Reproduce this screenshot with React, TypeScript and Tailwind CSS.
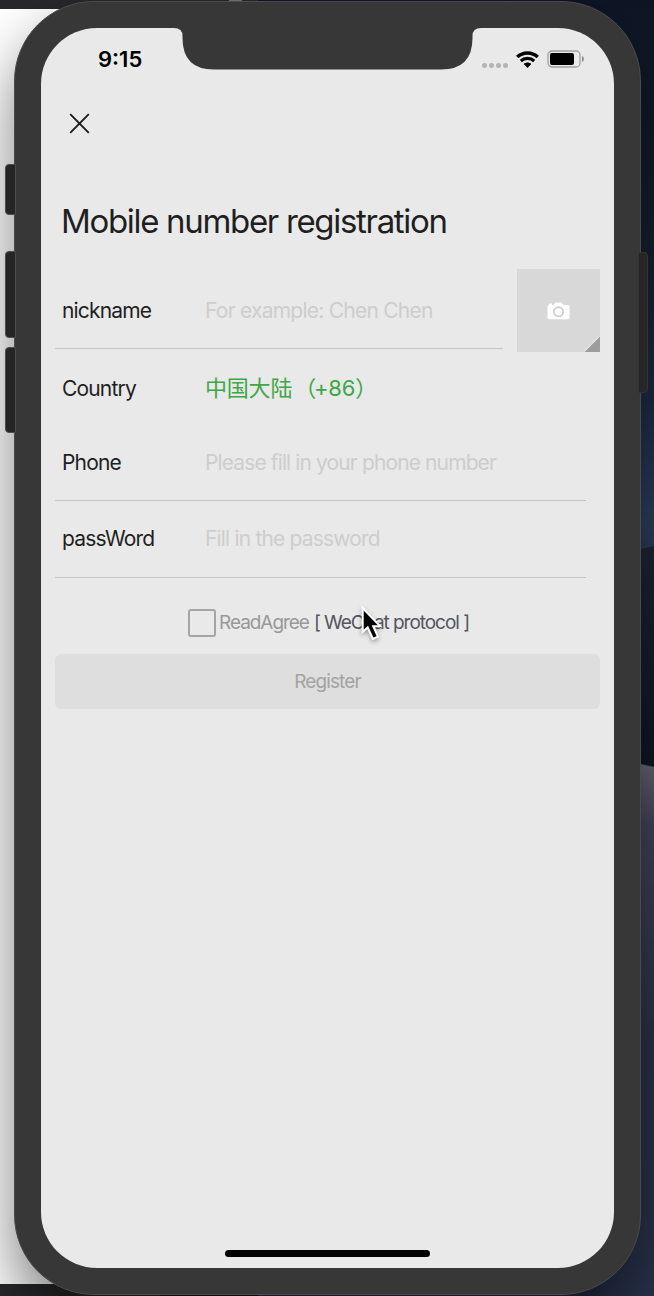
import type { ReactNode } from "react";

function Desktop() {
  return (
    <div className="absolute inset-0 flex overflow-hidden">
      <div className="flex w-[160px] flex-col bg-[#26282b]">
        <div className="h-[9px] shrink-0" />
        <div className="flex-1 bg-white" />
        <div className="h-[12px] shrink-0" />
      </div>
      <div className="flex h-[20px] w-[98px] bg-[#26282b] pl-[69px]">
        <div className="h-[3px] w-[13px] rounded-b-sm bg-[#777777]" />
      </div>
      <div className="flex-1 bg-linear-to-b from-[#0d1425] to-[#242d45]" />
      <svg className="h-[1296px] w-[54px] shrink-0" viewBox="0 0 54 1296">
        <defs>
          <linearGradient id="sky" x1="0" y1="0" x2="0" y2="1">
            <stop offset="0" stopColor="#0e1525" />
            <stop offset="0.45" stopColor="#16202f" />
            <stop offset="0.72" stopColor="#1d2b45" />
            <stop offset="0.93" stopColor="#2e3e5f" />
            <stop offset="1" stopColor="#2b3956" />
          </linearGradient>
          <linearGradient id="ridge" x1="0" y1="0" x2="0" y2="1">
            <stop offset="0" stopColor="#1f2536" />
            <stop offset="1" stopColor="#0e1524" />
          </linearGradient>
          <linearGradient id="dune" x1="0" y1="0" x2="0" y2="1">
            <stop offset="0" stopColor="#686876" />
            <stop offset="0.12" stopColor="#42445a" />
            <stop offset="0.5" stopColor="#2c3148" />
            <stop offset="1" stopColor="#28324c" />
          </linearGradient>
        </defs>
        <rect width="54" height="560" fill="url(#sky)" />
        <path d="M0 549H41L54 546V775H0Z" fill="url(#ridge)" />
        <path d="M0 762L41 764L54 767V1296H0Z" fill="url(#dune)" />
      </svg>
    </div>
  );
}

function StatusBar() {
  return (
    <div className="flex h-[62px] shrink-0 items-center pr-[29px] pl-[57px]">
      <span className="text-[22px] leading-none font-semibold tracking-[0px] text-black">9:15</span>
      <div className="ml-auto flex items-center">
        <div className="mt-[12px] flex gap-[2px]">
          <i className="size-[5px] rounded-full bg-[#b4b4b4]" />
          <i className="size-[5px] rounded-full bg-[#b4b4b4]" />
          <i className="size-[5px] rounded-full bg-[#b4b4b4]" />
          <i className="size-[5px] rounded-full bg-[#b4b4b4]" />
        </div>
        <svg className="ml-[8px] h-[17px] w-[23px]" viewBox="0 0 23 17">
          <path d="M1.2 6C7 .6 16 .6 21.8 6" fill="none" stroke="#000" strokeWidth="3.4" />
          <path d="M4.8 10C8.5 6.5 14.5 6.5 18.2 10" fill="none" stroke="#000" strokeWidth="3.1" />
          <path d="M7.7 13C9.9 11 13.1 11 15.3 13L11.5 17Z" fill="#000" />
        </svg>
        <svg className="ml-[8px] h-[18px] w-[38px]" viewBox="0 0 38 18">
          <rect x="1" y="1" width="32" height="16" rx="4" fill="none" stroke="#a0a0a0" strokeWidth="1.3" />
          <rect x="3" y="3" width="24" height="12" rx="2" fill="#000" />
          <path d="M35 6c2.6 1 2.6 5 0 6Z" fill="#8d8d8d" />
        </svg>
      </div>
    </div>
  );
}

function Field({ label, children }: { label: string; children: ReactNode }) {
  return (
    <div className="flex h-full items-center pt-px pl-[7px] text-[21px] leading-[28px]">
      <span className="w-[143px] shrink-0 tracking-[-0.83px] text-[#1f1f1f]">{label}</span>
      {children}
    </div>
  );
}

function AvatarPicker() {
  return (
    <div className="relative flex size-[83px] shrink-0 items-center justify-center bg-[#d8d8d8]">
      <svg className="h-[18px] w-[23px]" viewBox="0 0 23 18">
        <path d="M2 3V1.5H5V3H6.5L8.5.6H14.5L16.5 3H21Q22.5 3 22.5 4.5V15.8Q22.5 17.3 21 17.3H2Q.5 17.3.5 15.8V4.5Q.5 3 2 3Z" fill="#fff" />
        <circle cx="11.5" cy="9.8" r="4.6" fill="none" stroke="#d0d0d0" strokeWidth="1.9" />
      </svg>
      <svg className="absolute right-0 bottom-0 size-[17px]" viewBox="0 0 17 17">
        <path d="M0 17L17 0V17Z" fill="#e6e6e6" />
        <path d="M1.5 17L17 1.5V17Z" fill="#9c9c9c" />
      </svg>
    </div>
  );
}

function Cursor() {
  return (
    <svg className="absolute top-[575px] left-[317px] h-[42px] w-[32px] drop-shadow-[0_2px_2px_rgba(0,0,0,0.35)]" viewBox="0 0 32 42">
      <path d="M4.7 5V28.8L9.7 24.5L14.9 36L19.9 33.7L15.2 23.2H22.2Z" fill="#000" stroke="#fff" strokeWidth="2" />
    </svg>
  );
}

function Screen() {
  return (
    <main className="relative flex h-[1240px] w-[573px] flex-col overflow-hidden rounded-[56px] bg-[#e9e9e9]">
      <StatusBar />
      <button className="mt-[23px] ml-[28px] size-[21px]" aria-label="Close">
        <svg className="size-[21px]" viewBox="0 0 21 21">
          <path d="M1.2 1.2L19.8 19.8M19.8 1.2L1.2 19.8" stroke="#1c1c1c" strokeWidth="1.9" />
        </svg>
      </button>
      <h1 className="mt-[67px] ml-[20px] text-[33px] leading-[40px] tracking-[-1.32px] whitespace-nowrap text-[#1f1f1f]">
        Mobile number registration
      </h1>
      <div className="mt-[28px] flex pr-[14px] pl-[14px]">
        <div className="mr-[14px] h-[80px] flex-1 border-b border-[#c6c6c6] pt-[3px]">
          <Field label="nickname">
            <span className="tracking-[-0.76px] whitespace-nowrap text-[#cdcdcd]">For example: Chen Chen</span>
          </Field>
        </div>
        <AvatarPicker />
      </div>
      <div className="mr-[28px] ml-[14px] h-[72px]">
        <Field label="Country">
          <span className="mb-px font-['Inter','Noto_Sans_CJK_SC',sans-serif] text-[22px] tracking-[-0.2px] whitespace-nowrap text-[#3ea746]">
            中国大陆<span className="mr-[-2px] ml-[2px]">（</span>+86）
          </span>
        </Field>
      </div>
      <div className="mr-[28px] ml-[14px] h-[77px] border-b border-[#c6c6c6]">
        <Field label="Phone">
          <span className="tracking-[-0.88px] whitespace-nowrap text-[#cdcdcd]">Please fill in your phone number</span>
        </Field>
      </div>
      <div className="mr-[28px] ml-[14px] h-[77px] border-b border-[#c6c6c6] pb-px">
        <Field label="passWord">
          <span className="tracking-[-0.82px] whitespace-nowrap text-[#cdcdcd]">Fill in the password</span>
        </Field>
      </div>
      <div className="mt-[31px] flex h-[28px] items-center pl-[147px] text-[19px] tracking-[-1.04px] whitespace-nowrap">
        <span className="mr-[3px] size-[28px] rounded-[3px] border-2 border-[#a5a5a5]" />
        <span className="text-[#989898]">ReadAgree</span>
        <span className="ml-[5px] text-[#55555f]">[ WeChat protocol ]</span>
      </div>
      <button className="mx-[14px] mt-[17px] h-[55px] shrink-0 rounded-[6px] bg-[#dedede] pt-px text-[19px] tracking-[-0.9px] text-[#a3a3a3]">
        Register
      </button>
      <div className="mt-auto mb-[11px] h-[7px] w-[205px] self-center rounded-full bg-black" />
      <Cursor />
    </main>
  );
}

function Notch() {
  return (
    <svg className="absolute top-[25px] left-[159px] h-[43px] w-[307px]" viewBox="0 0 307 43">
      <path d="M0 0V1Q8.5 1 8.5 9V11Q8.5 42.5 40 42.5H267Q298.5 42.5 298.5 11V9Q298.5 1 307 1V0Z" fill="#373737" />
    </svg>
  );
}

export default function App() {
  return (
    <div className="relative h-[1296px] w-[654px] overflow-hidden bg-[#0d1425] pt-px pl-[14px] font-['Inter',sans-serif]">
      <Desktop />
      <div className="relative h-[1294px] w-[627px] rounded-[80px] border border-[#4b4b4b] bg-[#373737] pt-[26px] pl-[26px] shadow-[0_30px_60px_rgba(0,0,0,0.5)]">
        <Screen />
        <Notch />
      </div>
      <div className="absolute top-[164px] left-[5px] h-[51px] w-[11px] rounded-l-[4px] border border-[#4c4c4c] bg-[#252525]" />
      <div className="absolute top-[251px] left-[5px] h-[87px] w-[11px] rounded-l-[4px] border border-[#4c4c4c] bg-[#252525]" />
      <div className="absolute top-[347px] left-[5px] h-[86px] w-[11px] rounded-l-[4px] border border-[#4c4c4c] bg-[#252525]" />
      <div className="absolute top-[252px] left-[638px] h-[141px] w-[10px] rounded-r-[4px] border border-[#333333] bg-[#262626]" />
    </div>
  );
}
